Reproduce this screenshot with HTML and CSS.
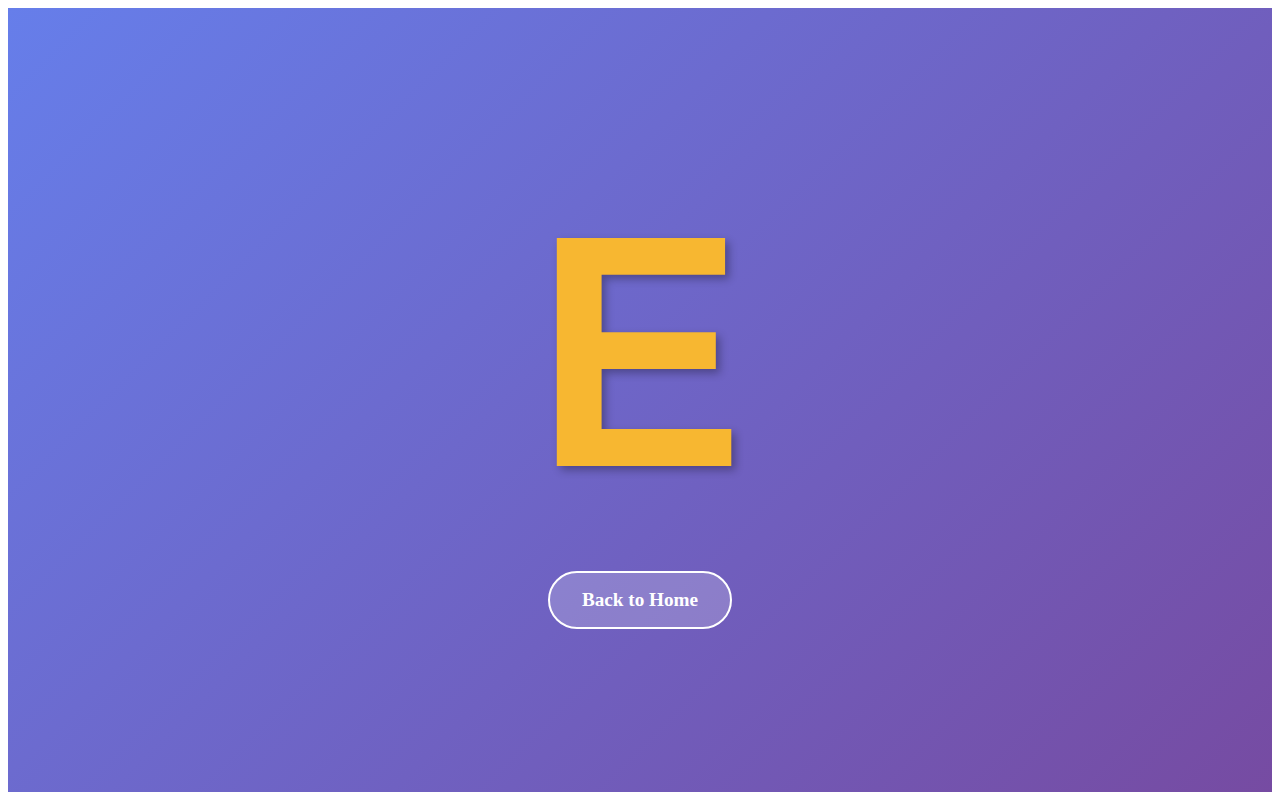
FILE: index.html
```html
<!DOCTYPE html>
<html lang="en">
<head>
<meta charset="utf-8">
<title>E</title>
<link rel="stylesheet" href="styles.css">
</head>
<body>
<main class="stage">
  <div class="letter">E</div>
  <a class="home-btn" href="#">Back to Home</a>
</main>
</body>
</html>
```

FILE: styles.css
```css
html, body {
  margin: 0;
  padding: 0;
}
body {
  margin: 8px;
  font-family: "Liberation Serif", "Times New Roman", serif;
}
.stage {
  height: calc(100vh - 16px);
  background: linear-gradient(135deg, #667eea 0%, #764ba2 100%);
  display: flex;
  flex-direction: column;
  align-items: center;
  justify-content: center;
}
.letter {
  font-family: "Liberation Sans", Arial, sans-serif;
  font-weight: bold;
  font-size: 320px;
  color: #f7b731;
  text-shadow: 4px 4px 8px rgba(0, 0, 0, 0.3);
  margin-bottom: 32px;
  transform: scale(0.972, 1.036);
  transform-origin: 50% 295px;
}
.home-btn {
  display: inline-block;
  padding: 16px 32px;
  font-size: 19.2px;
  font-weight: bold;
  color: #ffffff;
  text-decoration: none;
  background: rgba(255, 255, 255, 0.2);
  border: 2px solid #ffffff;
  border-radius: 30px;
}
```
